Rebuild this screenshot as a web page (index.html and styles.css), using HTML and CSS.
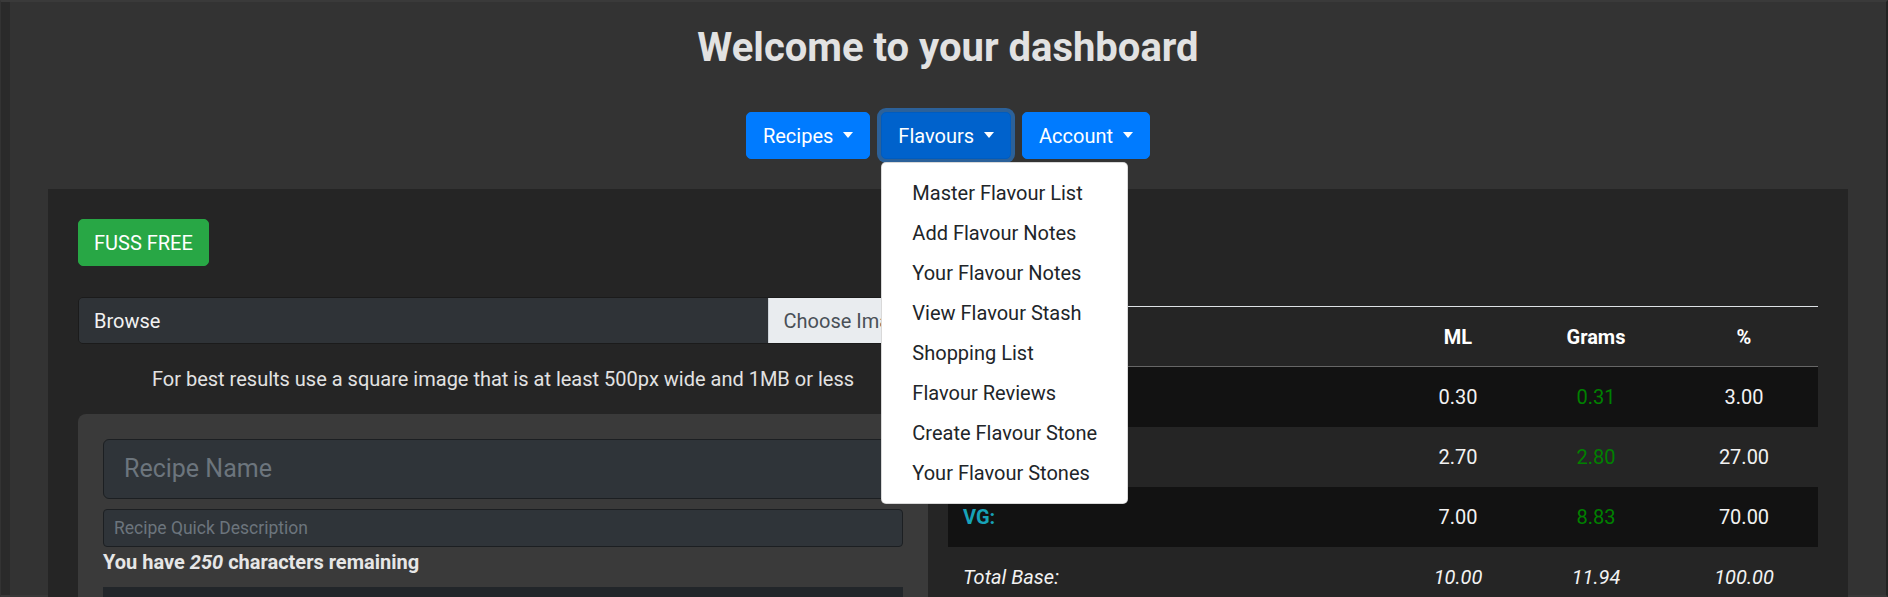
FILE: index.html
```html
<!DOCTYPE html>
<html lang="en">
<head>
  <meta charset="UTF-8">
  <meta name="viewport" content="width=device-width, initial-scale=1.0">
  <title>Dashboard</title>
  <link rel="stylesheet" href="styles.css">
</head>
<body>
  <div class="window">
    <div class="side-strip"></div>
    <main class="page">
      <h1 class="page-title">Welcome to your dashboard</h1>

      <nav class="menu-bar">
        <div class="dropdown">
          <button class="btn btn-primary dropdown-toggle">Recipes</button>
        </div>
        <div class="dropdown">
          <button class="btn btn-primary dropdown-toggle active">Flavours</button>
          <div class="dropdown-menu">
            <a class="dropdown-item">Master Flavour List</a>
            <a class="dropdown-item">Add Flavour Notes</a>
            <a class="dropdown-item">Your Flavour Notes</a>
            <a class="dropdown-item">View Flavour Stash</a>
            <a class="dropdown-item">Shopping List</a>
            <a class="dropdown-item">Flavour Reviews</a>
            <a class="dropdown-item">Create Flavour Stone</a>
            <a class="dropdown-item">Your Flavour Stones</a>
          </div>
        </div>
        <div class="dropdown">
          <button class="btn btn-primary dropdown-toggle">Account</button>
        </div>
      </nav>

      <section class="panel">
        <div class="left-col">
          <button class="btn btn-success">FUSS FREE</button>

          <div class="file-input">
            <span class="file-label">Browse</span>
            <span class="file-button">Choose Image</span>
          </div>
          <p class="hint">For best results use a square image that is at least 500px wide and 1MB or less</p>

          <div class="recipe-card">
            <input type="text" class="input-lg" placeholder="Recipe Name">
            <input type="text" class="input-sm" placeholder="Recipe Quick Description">
            <div class="chars-left">You have <em>250</em> characters remaining</div>
            <div class="dark-box"></div>
          </div>
        </div>

        <div class="right-col">
          <table class="mix-table">
            <thead>
              <tr>
                <th></th>
                <th class="col-ml">ML</th>
                <th class="col-grams">Grams</th>
                <th class="col-pct">%</th>
              </tr>
            </thead>
            <tbody>
              <tr class="odd">
                <td class="label"></td>
                <td>0.30</td>
                <td class="grams">0.31</td>
                <td>3.00</td>
              </tr>
              <tr>
                <td class="label"></td>
                <td>2.70</td>
                <td class="grams">2.80</td>
                <td>27.00</td>
              </tr>
              <tr class="odd">
                <td class="label vg">VG:</td>
                <td>7.00</td>
                <td class="grams">8.83</td>
                <td>70.00</td>
              </tr>
              <tr class="total">
                <td>Total Base:</td>
                <td>10.00</td>
                <td>11.94</td>
                <td>100.00</td>
              </tr>
            </tbody>
          </table>
        </div>
      </section>
    </main>
  </div>
</body>
</html>
```

FILE: styles.css
```css
body {
  margin: 0;
  padding: 0;
  height: 597px;
  overflow: hidden;
  background-color: #333;
  font-family: Roboto, "Liberation Sans", Arial, sans-serif;
  font-size: 20px;
  line-height: 30px;
  color: #e2e2e2;
}

.window {
  display: flex;
  height: 597px;
  box-sizing: border-box;
  border-top: 2px solid #3a3a3a;
  border-right: 2px solid #232323;
  border-bottom: 2px solid #383838;
  border-left: 1px solid #333;
}

.side-strip {
  flex: none;
  width: 9px;
  background-color: #2a2a2a;
}

.page {
  flex: 1;
  min-width: 0;
  padding-top: 22px;
}

.page-title {
  margin: 0;
  text-align: center;
  font-size: 40px;
  line-height: 48px;
  font-weight: 700;
  color: #e2e2e2;
}

/* top menu */
.menu-bar {
  display: flex;
  justify-content: center;
  gap: 11px;
  margin-top: 40px;
}

.dropdown {
  position: relative;
}

.btn {
  display: inline-block;
  padding: 7.5px 16px;
  font-family: inherit;
  font-size: 20px;
  line-height: 30px;
  font-weight: 400;
  color: #fff;
  border: 1px solid transparent;
  border-radius: 5px;
  cursor: pointer;
}

.btn-primary {
  background-color: #007bff;
  border-color: #007bff;
}

.btn-primary.active {
  background-color: #0062cc;
  border-color: #005cbf;
  box-shadow: 0 0 0 4px rgba(38, 143, 255, 0.5);
}

.btn-success {
  padding: 7.5px 15px;
  background-color: #28a745;
  border-color: #28a745;
}

.dropdown-toggle::after {
  content: "";
  display: inline-block;
  margin-left: 10px;
  vertical-align: 5px;
  border-top: 6px solid;
  border-left: 5.5px solid transparent;
  border-right: 5.5px solid transparent;
}

.dropdown-menu {
  position: absolute;
  top: calc(100% + 2.5px);
  left: 0;
  z-index: 10;
  min-width: 200px;
  padding: 10px 0;
  background-color: #fff;
  border: 1px solid rgba(0, 0, 0, 0.15);
  border-radius: 5px;
}

.dropdown-item {
  display: block;
  padding: 5px 30px;
  white-space: nowrap;
  color: #212529;
  cursor: pointer;
}

/* main panel */
.panel {
  display: grid;
  grid-template-columns: 850px 1fr;
  gap: 20px;
  margin: 30px 38px 0;
  padding: 30px;
  height: 600px;
  background-color: #252525;
}

.left-col .btn-success {
  display: block;
  margin-bottom: 31px;
}

.file-input {
  display: flex;
  height: 47px;
  box-sizing: border-box;
  border: 1px solid #1b1b1b;
  border-radius: 5px;
  overflow: hidden;
  margin-bottom: 20px;
}

.file-label {
  flex: 1;
  padding: 7.5px 15px;
  background-color: #2f3337;
  color: #f2f2f2;
}

.file-button {
  padding: 7.5px 15px;
  background-color: #e9ecef;
  color: #495057;
  border-left: 1px solid #ced4da;
}

.hint {
  margin: 0 0 20px;
  text-align: center;
  color: #e2e2e2;
}

.recipe-card {
  padding: 25px;
  background-color: #3a3a3a;
  border-radius: 8px;
  height: 300px;
}

.recipe-card input {
  display: block;
  width: 100%;
  box-sizing: border-box;
  font-family: inherit;
  background-color: #2f3439;
  border: 1px solid #1c1f22;
  color: #e2e2e2;
}

.recipe-card input::placeholder {
  color: #6c757d;
}

.input-lg {
  height: 59.5px;
  padding: 10px 20px;
  font-size: 25px;
  border-radius: 6px;
}

.input-sm {
  height: 37.5px;
  margin-top: 10.5px;
  padding: 5px 10px;
  font-size: 17.5px;
  border-radius: 4px;
}

.chars-left {
  font-weight: 700;
  color: #e6e6e6;
}

.dark-box {
  height: 80px;
  margin-top: 10px;
  background-color: #22262a;
}

/* mix table */
.mix-table {
  width: 100%;
  margin-top: 87px;
  border-collapse: separate;
  border-spacing: 0;
  color: #f2f2f2;
}

.mix-table th {
  padding: 15px 15px 14px;
  border-top: 1px solid #dee2e6;
  border-bottom: 1px solid #666;
  font-weight: 700;
  color: #fff;
  text-align: center;
}

.mix-table .col-ml {
  width: 98px;
}

.mix-table .col-grams,
.mix-table .col-pct {
  width: 118px;
}

.mix-table td {
  padding: 15px;
  text-align: center;
}

.mix-table td:first-child {
  text-align: left;
}

.mix-table tr.odd td {
  background-color: #121212;
}

.mix-table .grams {
  color: #008000;
}

.mix-table .label {
  font-weight: 700;
}

.mix-table .vg {
  color: #17a2b8;
}

.mix-table tr.total td {
  font-style: italic;
}
```
